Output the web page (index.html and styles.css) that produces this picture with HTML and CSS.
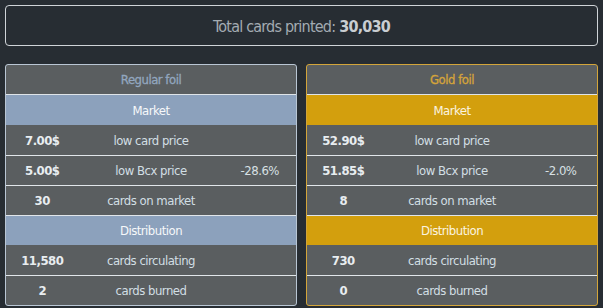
FILE: index.html
```html
<!DOCTYPE html>
<html>
<head>
<meta charset="utf-8">
<link rel="stylesheet" href="styles.css">
</head>
<body>
<div class="page">
  <div class="total">Total cards printed: <b>30,030</b></div>
  <div class="cards">
    <div class="card regular">
      <div class="head">Regular foil</div>
      <div class="band">Market</div>
      <div class="row"><span class="val">7.00$</span><span class="lbl">low card price</span><span class="ext"></span></div>
      <div class="row"><span class="val">5.00$</span><span class="lbl">low Bcx price</span><span class="ext">-28.6%</span></div>
      <div class="row"><span class="val">30</span><span class="lbl">cards on market</span><span class="ext"></span></div>
      <div class="band">Distribution</div>
      <div class="row"><span class="val">11,580</span><span class="lbl">cards circulating</span><span class="ext"></span></div>
      <div class="row last"><span class="val">2</span><span class="lbl">cards burned</span><span class="ext"></span></div>
    </div>
    <div class="card gold">
      <div class="head">Gold foil</div>
      <div class="band">Market</div>
      <div class="row"><span class="val">52.90$</span><span class="lbl">low card price</span><span class="ext"></span></div>
      <div class="row"><span class="val">51.85$</span><span class="lbl">low Bcx price</span><span class="ext">-2.0%</span></div>
      <div class="row"><span class="val">8</span><span class="lbl">cards on market</span><span class="ext"></span></div>
      <div class="band">Distribution</div>
      <div class="row"><span class="val">730</span><span class="lbl">cards circulating</span><span class="ext"></span></div>
      <div class="row last"><span class="val">0</span><span class="lbl">cards burned</span><span class="ext"></span></div>
    </div>
  </div>
</div>
</body>
</html>
```
FILE: styles.css
```css
html, body {
  margin: 0;
  padding: 0;
  background: #272d33;
}
body {
  font-family: "Liberation Sans Narrow", "DejaVu Sans Condensed", "Liberation Sans", sans-serif;
  font-stretch: condensed;
  color: #dfe6ea;
}
.page {
  padding: 5px 5px 0 5px;
  width: 593px;
  display: flex;
  flex-direction: column;
  gap: 18px;
}
.total {
  height: 39px;
  border: 1px solid #cfd4d8;
  border-radius: 4px;
  display: flex;
  align-items: center;
  justify-content: center;
  font-size: 16px;
  letter-spacing: -0.8px;
  color: #a3abb2;
  padding-top: 2px;
  box-sizing: border-box;
  height: 41px;
}
.total b {
  color: #c9ced2;
  margin-left: 4px;
}
.cards {
  display: grid;
  grid-template-columns: 292px 292px;
  gap: 9px;
}
.card {
  background: #5a5e60;
  border: 1px solid #b9c6d4;
  border-radius: 3px;
  overflow: hidden;
  font-size: 13px;
  letter-spacing: -0.5px;
}
.card.gold {
  border-color: #d3a53a;
}
.head {
  height: 29px;
  border-bottom: 1px solid #dfe4e8;
  display: flex;
  align-items: center;
  justify-content: center;
  color: #92a6bf;
  -webkit-text-stroke: 0.3px #92a6bf;
}
.gold .head {
  color: #d5a43a;
  -webkit-text-stroke: 0.3px #d5a43a;
}
.band {
  height: 30px;
  display: flex;
  align-items: center;
  justify-content: center;
  background: #8ca1bc;
  color: #f6f8fa;
}
.gold .band {
  background: #d39f0d;
  color: #fbf4e0;
}
.row {
  height: 29px;
  border-top: 1px solid #e1e6ea;
  display: grid;
  grid-template-columns: 25% 50% 25%;
  align-items: center;
  text-align: center;
}
.band + .row {
  border-top: none;
  height: 30px;
}
.row + .band {
  border-top: 1px solid #e1e6ea;
  height: 29px;
}
.val {
  font-weight: bold;
  color: #e8edf0;
}
.lbl {
  color: #d2dfe4;
}
.ext {
  color: #d8e0e4;
}
```
